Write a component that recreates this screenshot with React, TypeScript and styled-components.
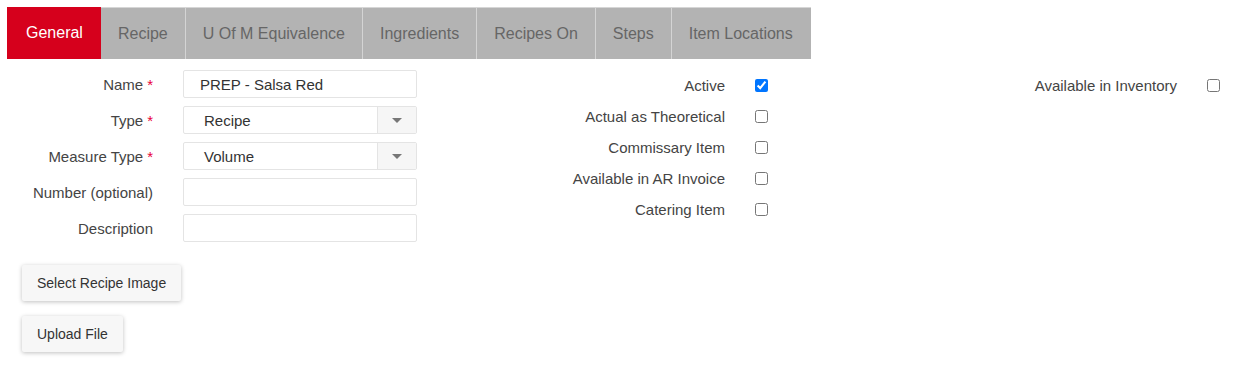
import React from 'react';
import styled, { createGlobalStyle } from 'styled-components';

const GlobalStyle = createGlobalStyle`
  html, body {
    margin: 0;
    padding: 0;
    background: #ffffff;
    font-family: "Liberation Sans", Arial, sans-serif;
  }
`;

const Page = styled.div`
  padding: 7px;
`;

const TabBar = styled.div`
  display: flex;
  width: 804px;
  height: 52px;
  background: #b3b3b3;
  border-top: 1px solid #d6d6d6;
  box-sizing: border-box;
`;

const Tab = styled.div<{ $active?: boolean }>`
  display: flex;
  align-items: center;
  padding: 0 17px;
  font-size: 16px;
  color: ${({ $active }) => ($active ? '#ffffff' : '#666666')};
  background: ${({ $active }) => ($active ? '#d6001c' : 'transparent')};
  margin-top: ${({ $active }) => ($active ? '-1px' : '0')};
  border-left: 1px solid ${({ $active }) => ($active ? '#d6001c' : '#d4d4d4')};
  &:first-child {
    border-left: none;
    padding: 0 18px 0 19px;
  }
  &:nth-child(2) {
    border-left: none;
  }
`;

const FormArea = styled.div`
  display: flex;
  align-items: flex-start;
  margin-top: 11px;
`;

const LeftColumn = styled.div`
  display: flex;
  flex-direction: column;
`;

const FieldGrid = styled.div`
  display: grid;
  grid-template-columns: 146px 234px;
  column-gap: 30px;
  row-gap: 8px;
  align-items: center;
`;

const Label = styled.label`
  text-align: right;
  font-size: 15px;
  color: #444444;
  white-space: nowrap;
`;

const Required = styled.span`
  color: #e8003a;
  margin-left: 4px;
`;

const TextBox = styled.div`
  height: 28px;
  box-sizing: border-box;
  border: 1px solid #e4e4e4;
  border-radius: 2px;
  padding: 0 16px;
  display: flex;
  align-items: center;
  font-size: 15px;
  color: #333333;
`;

const SelectBox = styled.div`
  height: 28px;
  box-sizing: border-box;
  border: 1px solid #e4e4e4;
  border-radius: 2px;
  display: flex;
  font-size: 15px;
  color: #333333;
`;

const SelectValue = styled.div`
  flex: 1;
  display: flex;
  align-items: center;
  padding: 0 20px;
`;

const SelectArrow = styled.div`
  width: 38px;
  background: #f6f6f6;
  border-left: 1px solid #e4e4e4;
  display: flex;
  align-items: center;
  justify-content: center;
  &::after {
    content: '';
    border-left: 5px solid transparent;
    border-right: 5px solid transparent;
    border-top: 5px solid #777777;
  }
`;

const ButtonStack = styled.div`
  display: flex;
  flex-direction: column;
  align-items: flex-start;
  gap: 15px;
  margin: 23px 0 0 15px;
`;

const Button = styled.button`
  height: 36px;
  padding: 0 15px;
  border: none;
  border-radius: 2px;
  background: #f7f7f7;
  box-shadow: 0 1px 4px rgba(0, 0, 0, 0.25);
  font-family: "Liberation Sans", Arial, sans-serif;
  font-size: 14px;
  color: #333333;
`;

const CheckGrid = styled.div<{ $offset: number }>`
  display: grid;
  grid-template-columns: 200px 13px;
  column-gap: 30px;
  grid-auto-rows: 31px;
  align-items: center;
  margin-left: ${({ $offset }) => $offset}px;
`;

const CheckLabel = styled.label`
  text-align: right;
  font-size: 15px;
  color: #444444;
  white-space: nowrap;
`;

const Check = styled.input.attrs({ type: 'checkbox' })`
  width: 13px;
  height: 13px;
  margin: 0;
`;

const tabs = ['General', 'Recipe', 'U Of M Equivalence', 'Ingredients', 'Recipes On', 'Steps', 'Item Locations'];

const flags = [
  { label: 'Active', checked: true },
  { label: 'Actual as Theoretical', checked: false },
  { label: 'Commissary Item', checked: false },
  { label: 'Available in AR Invoice', checked: false },
  { label: 'Catering Item', checked: false },
];

export default function App() {
  return (
    <>
      <GlobalStyle />
      <Page>
        <TabBar>
          {tabs.map((t, i) => (
            <Tab key={t} $active={i === 0}>{t}</Tab>
          ))}
        </TabBar>
        <FormArea>
          <LeftColumn>
            <FieldGrid>
              <Label>Name<Required>*</Required></Label>
              <TextBox>PREP - Salsa Red</TextBox>
              <Label>Type<Required>*</Required></Label>
              <SelectBox>
                <SelectValue>Recipe</SelectValue>
                <SelectArrow />
              </SelectBox>
              <Label>Measure Type<Required>*</Required></Label>
              <SelectBox>
                <SelectValue>Volume</SelectValue>
                <SelectArrow />
              </SelectBox>
              <Label>Number (optional)</Label>
              <TextBox />
              <Label>Description</Label>
              <TextBox />
            </FieldGrid>
            <ButtonStack>
              <Button>Select Recipe Image</Button>
              <Button>Upload File</Button>
            </ButtonStack>
          </LeftColumn>
          <CheckGrid $offset={108}>
            {flags.map((f) => (
              <React.Fragment key={f.label}>
                <CheckLabel>{f.label}</CheckLabel>
                <Check defaultChecked={f.checked} />
              </React.Fragment>
            ))}
          </CheckGrid>
          <CheckGrid $offset={209}>
            <CheckLabel>Available in Inventory</CheckLabel>
            <Check />
          </CheckGrid>
        </FormArea>
      </Page>
    </>
  );
}
